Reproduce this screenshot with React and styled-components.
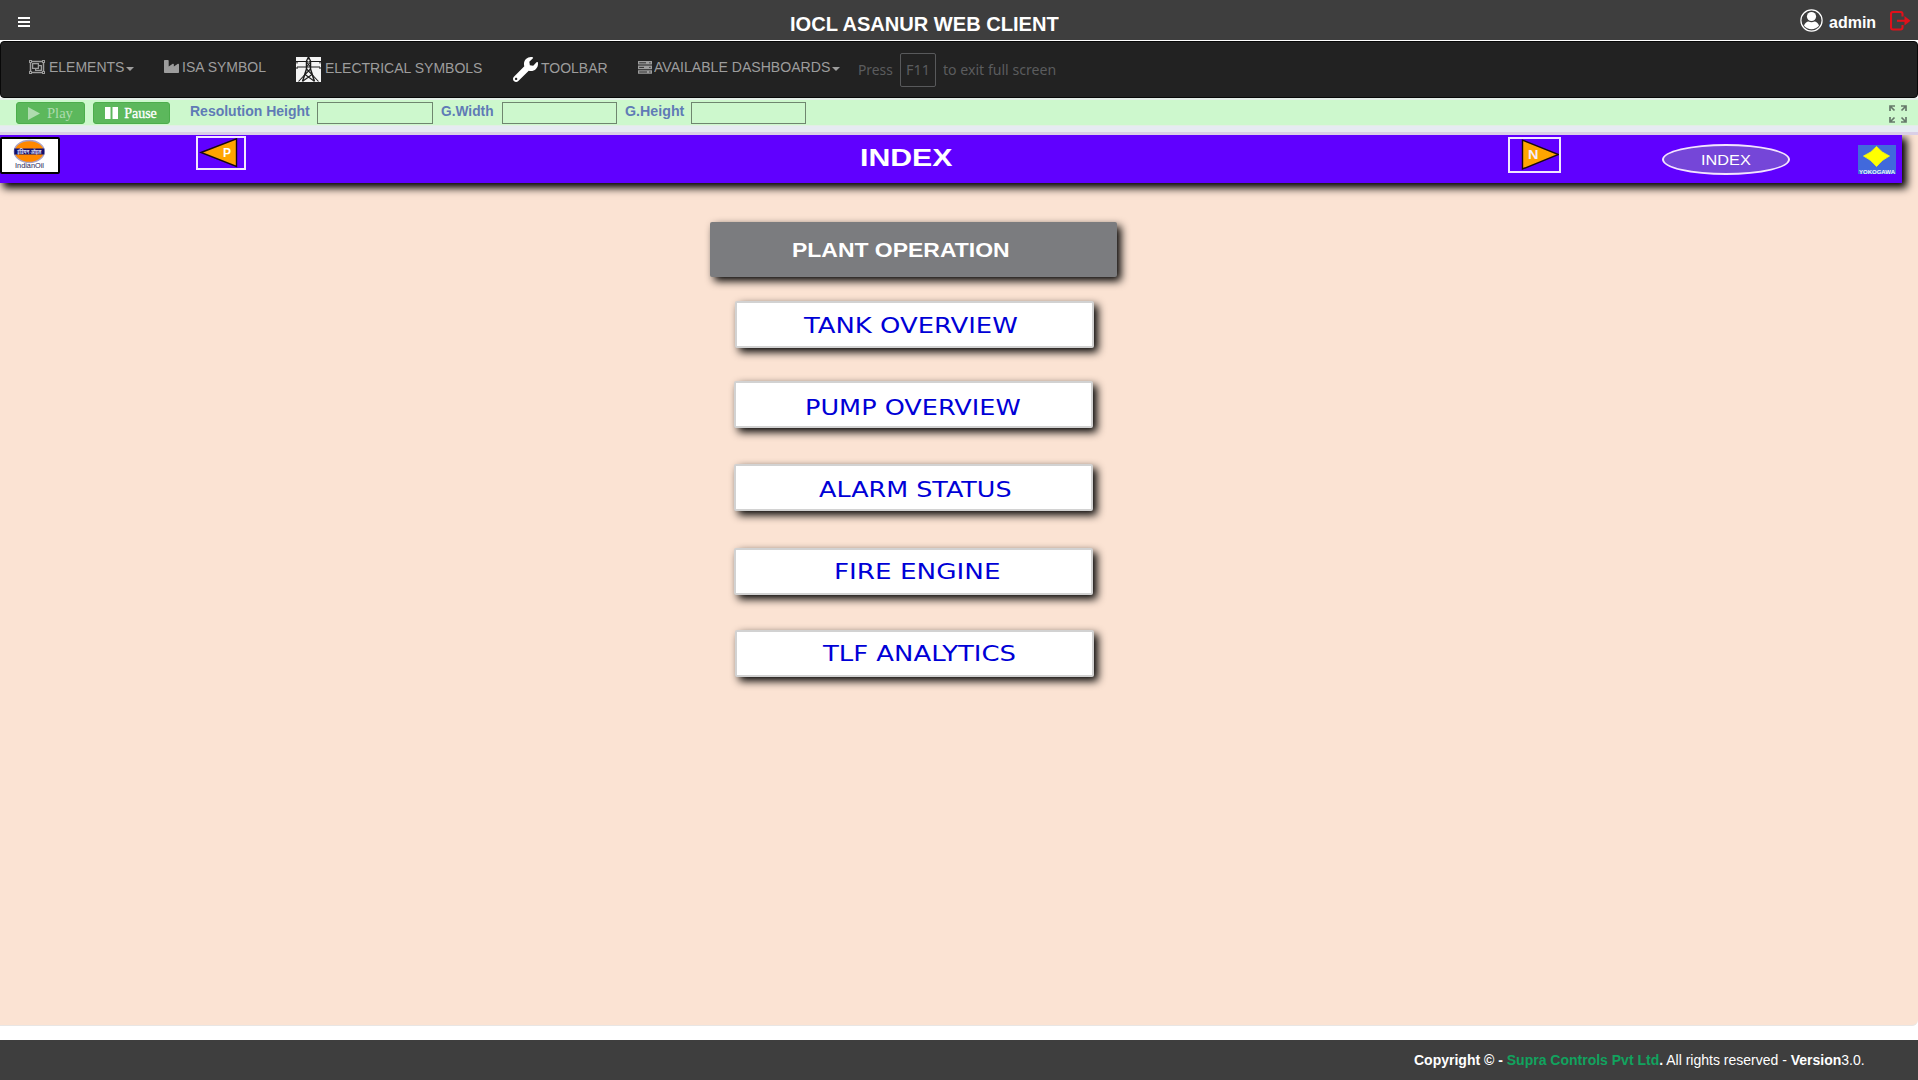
import React, { useLayoutEffect, useRef } from 'react';
import styled, { createGlobalStyle, css } from 'styled-components';
import { FaRegObjectGroup, FaIndustry, FaWrench } from 'react-icons/fa';

const Global = createGlobalStyle`
  * { box-sizing: border-box; }
  html, body { margin: 0; height: 1080px; overflow: hidden; background: #fff; }
  body { font-family: "Liberation Sans", Arial, sans-serif; font-size: 14px; line-height: 20px; color: #fff; }
  svg { display: block; flex: none; }
`;

const TextBox = styled.span`
  display: block;
  flex: none;
  width: ${(p) => p.$w}px;
  margin-left: ${(p) => p.$ml || 0}px;
  margin-top: ${(p) => p.$mt || 0}px;
  white-space: nowrap;
`;
const TextInner = styled.span`
  display: inline-block;
  vertical-align: top;
  transform-origin: 0 50%;
`;

// A label whose glyphs are stretched to a fixed advance width.
function Fit({ w, ml, mt, className, children }) {
  const ref = useRef(null);
  useLayoutEffect(() => {
    const el = ref.current;
    el.style.transform = `scaleX(${w / el.offsetWidth})`;
  }, [w]);
  return (
    <TextBox className={className} $w={w} $ml={ml} $mt={mt}>
      <TextInner ref={ref}>{children}</TextInner>
    </TextBox>
  );
}

const Page = styled.div`
  width: 1918px;
  height: 1080px;
  display: flex;
  flex-direction: column;
`;

const TopBar = styled.header`
  height: 41px;
  flex: none;
  display: flex;
  align-items: flex-start;
  background: #3e3e3e;
  border-bottom: 1px solid #fff;
`;
const Burger = styled.div`
  width: 12px;
  margin: 17px 0 0 18px;
  display: flex;
  flex-direction: column;
  gap: 2px;
`;
const Bar = styled.i`
  height: 2px;
  background: #fff;
`;
const Title = styled(Fit)`
  font-size: 20px;
  line-height: 24px;
  font-weight: bold;
`;
const User = styled(Fit)`
  font-size: 16px;
  line-height: 20px;
  font-weight: bold;
`;
const IconSlot = styled.div`
  flex: none;
  margin-left: ${(p) => p.$ml || 0}px;
  margin-top: ${(p) => p.$mt || 0}px;
`;

const Nav = styled.nav`
  height: 57px;
  flex: none;
  display: flex;
  align-items: stretch;
  background: #222;
  border: 1px solid #080808;
  border-radius: 4px;
`;
const NavItem = styled.div`
  display: flex;
  align-items: flex-start;
  margin-left: ${(p) => p.$ml}px;
  color: #9d9d9d;
`;
const Caret = styled.i`
  margin: 25px 0 0 2px;
  border-top: 4px solid #9d9d9d;
  border-left: 4px solid transparent;
  border-right: 4px solid transparent;
`;
const FullscreenHint = styled.div`
  display: flex;
  align-items: flex-start;
  width: 283px;
  padding-left: 18px;
  color: #5b5c5e;
  font-family: "Noto Sans", "Open Sans", sans-serif;
  font-size: 15px;
`;
const Key = styled.kbd`
  display: flex;
  width: 36px;
  height: 34px;
  margin: 11px 0 0 7px;
  border: 1px solid #58595b;
  border-radius: 2px;
  font: inherit;
`;

const Controls = styled.div`
  height: 34px;
  flex: none;
  display: flex;
  align-items: flex-start;
  background: linear-gradient(#e4efe8 0 2px, #cdf8cd 2px 27px, #e2efe4 27px 28px, #e6ebf2 28px);
`;
const Btn = styled.button`
  display: flex;
  flex: none;
  align-items: flex-start;
  width: ${(p) => p.$w}px;
  height: 22px;
  margin: 4px 0 0 ${(p) => p.$ml}px;
  padding: 0 0 0 11px;
  border: 1px solid #4cae4c;
  border-radius: 3px;
  background: #5cb85c;
  color: ${(p) => (p.$dim ? '#aedcae' : '#fff')};
  font: 14px/20px "Liberation Serif", "Times New Roman", serif;
  -webkit-text-stroke: ${(p) => (p.$dim ? 0 : 0.3)}px;
`;
const FieldLabel = styled(Fit)`
  color: #607bb6;
  font-weight: bold;
`;
const Field = styled.input`
  flex: none;
  width: ${(p) => p.$w}px;
  height: 22px;
  margin: 4px 0 0 ${(p) => p.$ml}px;
  border: 1px solid #6f866f;
  background: transparent;
`;

const Canvas = styled.main`
  height: 894px;
  flex: none;
  border-top: 3px solid #dacfe6;
  border-bottom: 1px solid #e9e6e4;
  border-bottom-right-radius: 6px;
  background: #fbe3d3;
  overflow: hidden;
`;
const Banner = styled.section`
  width: 1902px;
  height: 48px;
  display: flex;
  align-items: flex-start;
  background: #6000ff;
  box-shadow: 4px 4px 8px 1px #000;
`;
const LogoFrame = styled.div`
  flex: none;
  width: 60px;
  height: 37px;
  margin-top: 2px;
  border: 2px solid #000;
  border-radius: 2px;
  background: #fff;
`;
const NavBox = styled.div`
  flex: none;
  width: ${(p) => p.$w}px;
  height: ${(p) => p.$h}px;
  margin: ${(p) => p.$mt}px 0 0 ${(p) => p.$ml}px;
  border: 2px solid #f1e6ff;
`;
const BannerTitle = styled(Fit)`
  font-size: 24px;
  line-height: 28px;
  font-weight: bold;
`;
const Oval = styled.div`
  flex: none;
  display: flex;
  width: 128px;
  height: 31px;
  margin: 9px 0 0 101px;
  padding-left: 37px;
  border: 2px solid #f4e4ff;
  border-radius: 50%;
  background: #7546d8;
`;
const OvalText = styled(Fit)`
  font-size: 14px;
`;

const shadow = css`
  box-shadow: 4px 4px 8px #000;
`;
const Menu = styled.section`
  display: flex;
  flex-direction: column;
`;
const MenuHead = styled.div`
  display: flex;
  width: 407px;
  height: 55px;
  margin: 39px 0 0 710px;
  border-radius: 2px;
  background: #7b7c7f;
  ${shadow}
`;
const HeadText = styled(Fit)`
  font-size: 20px;
  line-height: 24px;
  font-weight: bold;
`;
const MenuItem = styled.a`
  display: flex;
  width: 359px;
  height: 47px;
  margin: ${(p) => p.$mt}px 0 0 ${(p) => p.$ml}px;
  border: 2px solid #d2d2d2;
  border-radius: 2px;
  background: #fff;
  color: #0000d6;
  ${shadow}
`;
const ItemText = styled(Fit)`
  font-family: "DejaVu Sans", Verdana, sans-serif;
  font-size: 22px;
  line-height: 28px;
`;

const Footer = styled.footer`
  height: 40px;
  flex: none;
  margin-top: 14px;
  display: flex;
  background: #3e3e3e;
`;
const Brand = styled.b`
  color: #11a35e;
`;

const ServerIcon = () => (
  <svg width="14" height="13" viewBox="0 0 14 13">
    <path d="M0 0H14V3.600H0ZM0 4.600H14V8.200H0ZM0 9.200H14V12.800H0Z" fill="#9d9d9d" />
    <path d="M1.200 1.800H8M1.200 6.400H6M1.200 11H9" stroke="#222" strokeWidth="0.900" />
    <path d="M11.200 1.800H12.600M11.200 6.400H12.600M11.200 11H12.600" stroke="#222" strokeWidth="0.900" />
  </svg>
);

const Pylon = () => (
  <svg width="25" height="25" viewBox="0 0 25 25">
    <rect width="25" height="25" fill="#f4f4f4" />
    <g fill="none" stroke="#1c1c1c" strokeWidth="1.3">
      <path d="M0 4.500H25M1 10H24M1 4.500V6.500M24 4.500V6.500M1 10V12M24 10V12" strokeWidth="1.100" />
      <path d="M12.500 0L10.500 4.500V12L6.500 24.500M12.500 0L14.500 4.500V12L18.500 24.500" strokeWidth="1.500" />
      <path d="M10.500 5L14.500 10M14.500 5L10.500 10M10.500 12L16 17.500M14.500 12L9 17.500M9 17.500L18 24M16 17.500L7 24M2.500 24.500L9 17.500M22.500 24.500L16 17.500" strokeWidth="1.100" />
    </g>
    <circle cx="12.500" cy="3.500" r="1.500" fill="#fff" stroke="#1c1c1c" />
  </svg>
);

const UserIcon = () => (
  <svg width="23" height="23" viewBox="0 0 23 23">
    <circle cx="11.500" cy="11.500" r="10.600" fill="none" stroke="#fff" strokeWidth="1.2" />
    <circle cx="11.500" cy="7.500" r="4.600" fill="#fff" />
    <path d="M4 16.800C4.500 13.800 7 12.800 8.500 12.500Q11.500 14 14.500 12.500C16 12.800 18.500 13.800 19 16.800Q16 20.200 11.500 20.200T4 16.800Z" fill="#fff" />
  </svg>
);

const LogoutIcon = () => (
  <svg width="21" height="20" viewBox="0 0 21 20" fill="none" stroke="#e0101a" strokeWidth="2.100">
    <path d="M12.500 5.500V3Q12.500 1 10.500 1H3Q1 1 1 3V16.500Q1 18.500 3 18.500H10.500Q12.500 18.500 12.500 16.500V14" />
    <path d="M7 9.800H16" />
    <path d="M14.500 5L20.500 9.800L14.500 14.500Z" fill="#e0101a" stroke="none" />
  </svg>
);

const ExpandIcon = () => (
  <svg width="18" height="18" viewBox="0 0 18 18" fill="none" stroke="#66786a" strokeWidth="1.700">
    <path d="M1 6V1H6M1 1L5.500 5.500M12 1H17V6M17 1L12.500 5.500M1 12V17H6M1 17L5.500 12.500M12 17H17V12M17 17L12.500 12.500" />
  </svg>
);

const IndianOil = () => (
  <svg width="56" height="33" viewBox="0 0 56 33">
    <ellipse cx="27.300" cy="12.500" rx="15" ry="11" fill="#f80" stroke="#a9a3c8" strokeWidth="1.400" />
    <rect x="12.300" y="9.500" width="30" height="6" fill="#10106e" />
    <text x="27.300" y="14.600" fontSize="6" fontWeight="bold" fill="#dcdcf4" textAnchor="middle" textLength="24" lengthAdjust="spacingAndGlyphs" fontFamily="Noto Sans, sans-serif">इंडियन ऑइल</text>
    <text x="13" y="28.800" fontSize="8" fill="#1c1c58" textLength="29" lengthAdjust="spacingAndGlyphs" fontFamily="Liberation Sans, sans-serif">IndianOil</text>
  </svg>
);

const PrevArrow = () => (
  <svg width="46" height="30" viewBox="0 0 46 30">
    <path d="M3 14.500L38.500 0.800V28.500Z" fill="#ffa500" stroke="#1a0a10" strokeWidth="1.400" />
    <text x="25" y="19" fontSize="12" fontWeight="bold" fill="#fff" fontFamily="Liberation Sans, sans-serif">P</text>
  </svg>
);

const NextArrow = () => (
  <svg width="49" height="32" viewBox="0 0 49 32">
    <path d="M12.500 1.200V30L48.500 15.500Z" fill="#ffa500" stroke="#1a0a10" strokeWidth="1.400" />
    <text x="18" y="19.800" fontSize="12" fontWeight="bold" fill="#f3ecff" textLength="10.500" lengthAdjust="spacingAndGlyphs" fontFamily="Liberation Sans, sans-serif">N</text>
  </svg>
);

const Yokogawa = () => (
  <svg width="38" height="29" viewBox="0 0 38 29">
    <rect width="38" height="29" fill="#4169dc" />
    <path d="M18.500 1.500Q24 8 31.500 11Q24 14.500 18.500 21.500Q13 14.500 5.500 11Q13 8 18.500 1.500Z" fill="#ff0" stroke="#ff0" strokeWidth="0.800" />
    <text x="1" y="28.600" fontSize="5.500" fontWeight="bold" fill="#f0f4ff" textLength="36" lengthAdjust="spacingAndGlyphs" fontFamily="Liberation Sans, sans-serif">YOKOGAWA</text>
  </svg>
);

const PlayIcon = () => (
  <svg width="12" height="13" viewBox="0 0 12 13"><path d="M0 0L12 6.500L0 13Z" fill="#aedcae" /></svg>
);
const PauseIcon = () => (
  <svg width="13" height="12" viewBox="0 0 13 12"><path d="M0 0H5.500V12H0ZM7.500 0H13V12H7.500Z" fill="#fff" /></svg>
);

const ITEMS = [
  { text: 'TANK OVERVIEW', mt: 24, ml: 735, pad: 67, w: 214, top: 9 },
  { text: 'PUMP OVERVIEW', mt: 33, ml: 734, pad: 69, w: 216, top: 11 },
  { text: 'ALARM STATUS', mt: 36, ml: 734, pad: 83, w: 193, top: 10 },
  { text: 'FIRE ENGINE', mt: 37, ml: 734, pad: 98, w: 167, top: 8 },
  { text: 'TLF ANALYTICS', mt: 35, ml: 735, pad: 86, w: 193, top: 8 },
];

export default function App() {
  return (
    <>
      <Global />
      <Page>
        <TopBar>
          <Burger><Bar /><Bar /><Bar /></Burger>
          <Title w={269} ml={760} mt={12}>IOCL ASANUR WEB CLIENT</Title>
          <IconSlot $ml={741} $mt={9}><UserIcon /></IconSlot>
          <User w={47} ml={6} mt={13}>admin</User>
          <IconSlot $ml={14} $mt={11}><LogoutIcon /></IconSlot>
        </TopBar>

        <Nav>
          <NavItem $ml={28}>
            <IconSlot $mt={17}><FaRegObjectGroup size={16} /></IconSlot>
            <Fit w={75} ml={4} mt={15}>ELEMENTS</Fit>
            <Caret />
          </NavItem>
          <NavItem $ml={30}>
            <IconSlot $mt={17}><FaIndustry size={15} /></IconSlot>
            <Fit w={84} ml={3} mt={15}>ISA SYMBOL</Fit>
          </NavItem>
          <NavItem $ml={30}>
            <IconSlot $mt={15}><Pylon /></IconSlot>
            <Fit w={157} ml={4} mt={16}>ELECTRICAL SYMBOLS</Fit>
          </NavItem>
          <NavItem $ml={31}>
            <IconSlot $mt={15}><FaWrench size={25} color="#fff" /></IconSlot>
            <Fit w={67} ml={3} mt={16}>TOOLBAR</Fit>
          </NavItem>
          <NavItem $ml={30}>
            <IconSlot $mt={19}><ServerIcon /></IconSlot>
            <Fit w={176} ml={2} mt={15}>AVAILABLE DASHBOARDS</Fit>
            <Caret />
          </NavItem>
          <FullscreenHint>
            <Fit w={35} mt={17}>Press</Fit>
            <Key><Fit w={24} ml={5} mt={5}>F11</Fit></Key>
            <Fit w={113} ml={7} mt={17}>to exit full screen</Fit>
          </FullscreenHint>
        </Nav>

        <Controls>
          <Btn $w={69} $ml={16} $dim>
            <IconSlot $mt={4}><PlayIcon /></IconSlot>
            <Fit w={26} ml={6} mt={1}>Play</Fit>
          </Btn>
          <Btn $w={77} $ml={8}>
            <IconSlot $mt={4}><PauseIcon /></IconSlot>
            <Fit w={33} ml={6} mt={1}>Pause</Fit>
          </Btn>
          <FieldLabel w={120} ml={20} mt={3}>Resolution Height</FieldLabel>
          <Field $w={116} $ml={7} />
          <FieldLabel w={53} ml={8} mt={3}>G.Width</FieldLabel>
          <Field $w={115} $ml={8} />
          <FieldLabel w={59} ml={8} mt={3}>G.Height</FieldLabel>
          <Field $w={115} $ml={7} />
          <IconSlot $ml={1083} $mt={7}><ExpandIcon /></IconSlot>
        </Controls>

        <Canvas>
          <Banner>
            <LogoFrame><IndianOil /></LogoFrame>
            <NavBox $w={50} $h={34} $mt={1} $ml={136}><PrevArrow /></NavBox>
            <BannerTitle w={92} ml={614} mt={9}>INDEX</BannerTitle>
            <NavBox $w={53} $h={36} $mt={2} $ml={556}><NextArrow /></NavBox>
            <Oval><OvalText w={50} mt={4}>INDEX</OvalText></Oval>
            <IconSlot $ml={68} $mt={10}><Yokogawa /></IconSlot>
          </Banner>
          <Menu>
            <MenuHead><HeadText w={218} ml={82} mt={16}>PLANT OPERATION</HeadText></MenuHead>
            {ITEMS.map((it) => (
              <MenuItem key={it.text} $mt={it.mt} $ml={it.ml}>
                <ItemText w={it.w} ml={it.pad} mt={it.top}>{it.text}</ItemText>
              </MenuItem>
            ))}
          </Menu>
        </Canvas>

        <Footer>
          <Fit w={451} ml={1414} mt={10}>
            <b>Copyright © - <Brand>Supra Controls Pvt Ltd</Brand>.</b> All rights reserved - <b>Version</b>3.0.
          </Fit>
        </Footer>
      </Page>
    </>
  );
}
